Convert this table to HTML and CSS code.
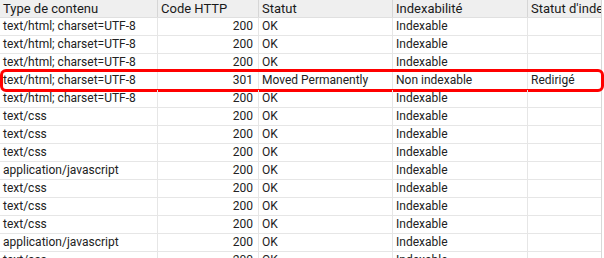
FILE: index.html
```html
<!DOCTYPE html>
<html lang="fr">
<head>
<meta charset="utf-8">
<link rel="stylesheet" href="styles.css">
</head>
<body>
<div class="grid">
  <div class="row head">
    <div class="cell">Type de contenu</div>
    <div class="cell">Code HTTP</div>
    <div class="cell">Statut</div>
    <div class="cell">Indexabilité</div>
    <div class="cell">Statut d'indexabilité</div>
  </div>
  <div class="row"><div class="cell">text/html; charset=UTF-8</div><div class="cell num">200</div><div class="cell">OK</div><div class="cell">Indexable</div><div class="cell"></div></div>
  <div class="row"><div class="cell">text/html; charset=UTF-8</div><div class="cell num">200</div><div class="cell">OK</div><div class="cell">Indexable</div><div class="cell"></div></div>
  <div class="row"><div class="cell">text/html; charset=UTF-8</div><div class="cell num">200</div><div class="cell">OK</div><div class="cell">Indexable</div><div class="cell"></div></div>
  <div class="row hl"><div class="cell">text/html; charset=UTF-8</div><div class="cell num">301</div><div class="cell">Moved Permanently</div><div class="cell">Non indexable</div><div class="cell">Redirigé</div></div>
  <div class="row"><div class="cell">text/html; charset=UTF-8</div><div class="cell num">200</div><div class="cell">OK</div><div class="cell">Indexable</div><div class="cell"></div></div>
  <div class="row"><div class="cell">text/css</div><div class="cell num">200</div><div class="cell">OK</div><div class="cell">Indexable</div><div class="cell"></div></div>
  <div class="row"><div class="cell">text/css</div><div class="cell num">200</div><div class="cell">OK</div><div class="cell">Indexable</div><div class="cell"></div></div>
  <div class="row"><div class="cell">text/css</div><div class="cell num">200</div><div class="cell">OK</div><div class="cell">Indexable</div><div class="cell"></div></div>
  <div class="row"><div class="cell">application/javascript</div><div class="cell num">200</div><div class="cell">OK</div><div class="cell">Indexable</div><div class="cell"></div></div>
  <div class="row"><div class="cell">text/css</div><div class="cell num">200</div><div class="cell">OK</div><div class="cell">Indexable</div><div class="cell"></div></div>
  <div class="row"><div class="cell">text/css</div><div class="cell num">200</div><div class="cell">OK</div><div class="cell">Indexable</div><div class="cell"></div></div>
  <div class="row"><div class="cell">text/css</div><div class="cell num">200</div><div class="cell">OK</div><div class="cell">Indexable</div><div class="cell"></div></div>
  <div class="row"><div class="cell">application/javascript</div><div class="cell num">200</div><div class="cell">OK</div><div class="cell">Indexable</div><div class="cell"></div></div>
  <div class="row"><div class="cell">text/css</div><div class="cell num">200</div><div class="cell">OK</div><div class="cell">Indexable</div><div class="cell"></div></div>
</div>
</body>
</html>
```
FILE: styles.css
```css
*, *::before, *::after {
  box-sizing: border-box;
}
html, body {
  margin: 0;
  padding: 0;
  background: #fff;
  overflow: hidden;
}
body {
  font-family: Roboto, "Noto Sans", sans-serif;
  font-size: 12px;
  color: #222;
}
.grid {
  width: 602px;
  border-right: 1px solid #d8d8d8;
}
.row {
  display: grid;
  grid-template-columns: 158px 101px 134px 135px 73px;
  height: 18px;
  border-bottom: 1px solid #e6e6e6;
  position: relative;
}
.row.head {
  background: #efefef;
  border-bottom: 1px solid #e0e0e0;
  font-size: 13px;
  color: #1a1a1a;
}
.cell {
  border-right: 1px solid #e6e6e6;
  padding: 0 3px;
  line-height: 17px;
  white-space: nowrap;
  overflow: hidden;
}
.head .cell {
  border-right-color: #d6d6d6;
}
.cell:last-child {
  border-right: none;
}
.num {
  text-align: right;
  padding-right: 5px;
}
.hl::after {
  content: "";
  position: absolute;
  left: 0;
  top: -3px;
  width: 604px;
  height: 23px;
  border: 3px solid #f00;
  border-radius: 6px;
  pointer-events: none;
}
```
